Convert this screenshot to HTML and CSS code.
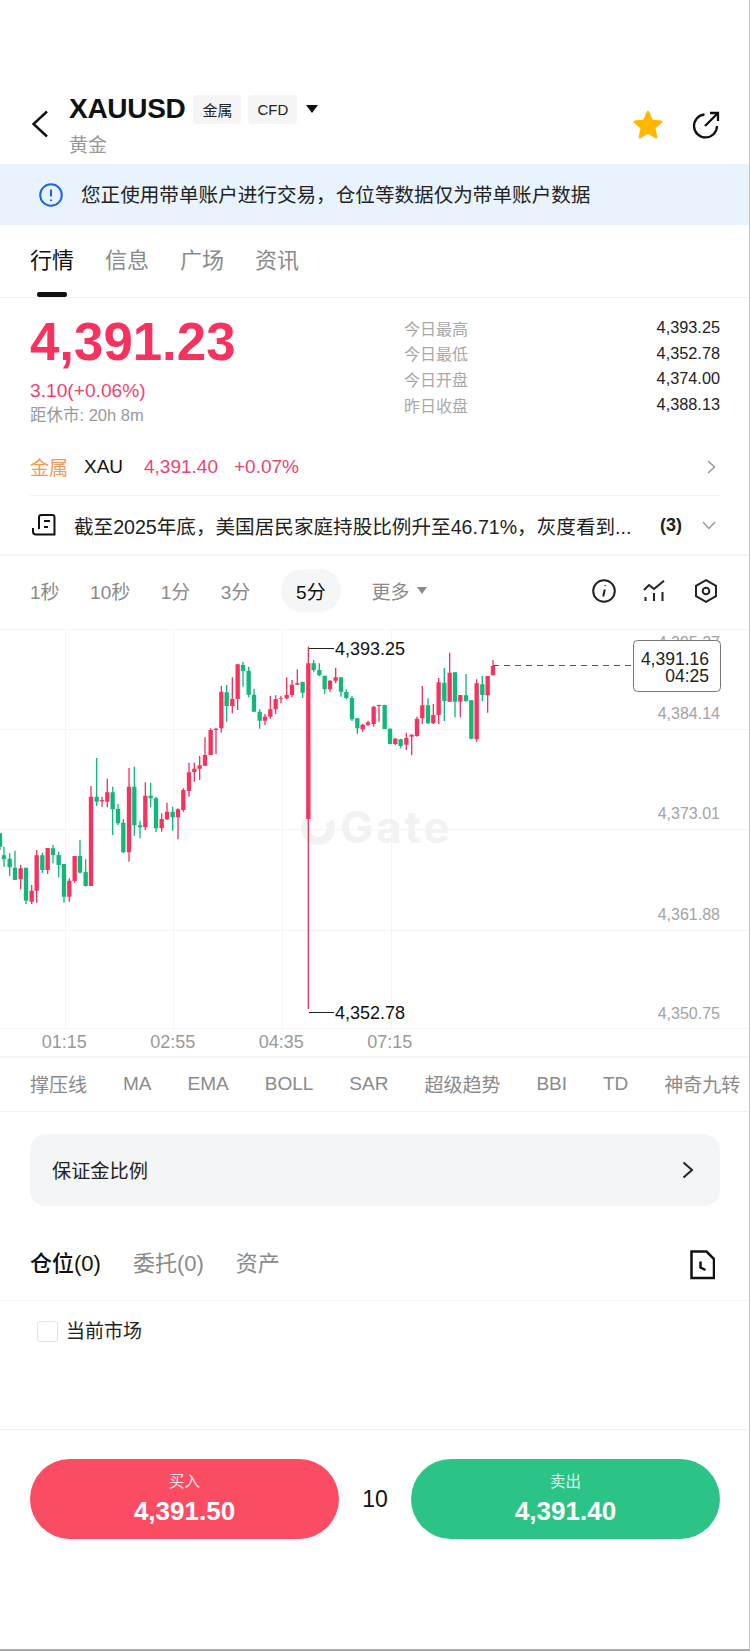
FILE: index.html
```html
<!DOCTYPE html>
<html lang="zh-CN">
<head>
<meta charset="utf-8">
<title>XAUUSD</title>
<link rel="stylesheet" href="styles.css">
</head>
<body>
<div class="page">
  <header class="header">
    <svg class="back" viewBox="0 0 16 28"><path d="M15 1.5 1.5 14 15 26.5"/></svg>
    <div class="title-col">
      <div class="title-row">
        <h1 class="symbol">XAUUSD</h1>
        <span class="tag">金属</span>
        <span class="tag">CFD</span>
        <span class="caret-dark"></span>
      </div>
      <div class="subtitle">黄金</div>
    </div>
    <div class="actions">
      <svg class="star" viewBox="0 0 32 32"><path d="M16 4l3.5 8.100 8.900 .9-6.700 5.900 1.900 8.600L16 23l-7.600 4.500 1.900-8.600L3.600 13l8.900-.9z"/></svg>
      <svg class="share" viewBox="0 0 28 28"><path d="M12.500 3.500A11.500 11.500 0 1 0 25 15M13 15 26 2M18 2h8v8"/></svg>
    </div>
  </header>

  <div class="banner">
    <svg class="banner-icon" viewBox="0 0 24 24"><circle cx="12" cy="12" r="10.800"/><path d="M12 6.500v7M12 16.500v1.500"/></svg>
    <span>您正使用带单账户进行交易，仓位等数据仅为带单账户数据</span>
  </div>

  <nav class="tabs">
    <span class="tab tab-active">行情</span>
    <span class="tab">信息</span>
    <span class="tab">广场</span>
    <span class="tab">资讯</span>
  </nav>

  <section class="quote">
    <div class="quote-left">
      <div class="price">4,391.23</div>
      <div class="change">3.10(+0.06%)</div>
      <div class="close-in">距休市: 20h 8m</div>
    </div>
    <div class="stats">
      <div class="stat"><span class="stat-label">今日最高</span><span>4,393.25</span></div>
      <div class="stat"><span class="stat-label">今日最低</span><span>4,352.78</span></div>
      <div class="stat"><span class="stat-label">今日开盘</span><span>4,374.00</span></div>
      <div class="stat"><span class="stat-label">昨日收盘</span><span>4,388.13</span></div>
    </div>
  </section>

  <div class="metal-row">
    <span class="metal-tag">金属</span>
    <span class="metal-name">XAU</span>
    <span class="metal-price">4,391.40</span>
    <span class="metal-change">+0.07%</span>
    <svg class="metal-chevron" viewBox="0 0 9 14"><path d="M1 1l6.500 6L1 13"/></svg>
  </div>

  <div class="news-row">
    <svg class="news-icon" viewBox="0 0 24 22"><path d="M7 15V3.500Q7 1 9.500 1h11q2 0 2 2.500v17H4q-3 0-3-3V14M12 7h6M12 13h4"/></svg>
    <span class="news-text">截至2025年底，美国居民家庭持股比例升至46.71%，灰度看到...</span>
    <span class="news-count">(3)</span>
    <svg class="news-chevron" viewBox="0 0 14 9"><path d="M1 1l6 6.500L13 1"/></svg>
  </div>

  <div class="timeframes">
    <span>1秒</span>
    <span>10秒</span>
    <span>1分</span>
    <span>3分</span>
    <span class="tf-active">5分</span>
    <span class="tf-more">更多<i class="caret-gray"></i></span>
    <div class="tf-icons">
      <svg viewBox="0 0 24 24"><circle cx="12" cy="12" r="10.800"/><path d="M12.800 10.500 11.200 17.500M13.300 6.300v.6"/></svg>
      <svg viewBox="0 0 24 24"><path d="M1 11l5-5 5 4L21 1.700M2.500 18v4M11 14v8M19.500 13v9"/></svg>
      <svg viewBox="0 0 24 24"><path d="M12 1.200l10 5.700v10.200l-10 5.700-10-5.700V6.900z"/><circle cx="12" cy="12" r="3.300"/></svg>
    </div>
  </div>

  <svg class="chart" viewBox="0 0 750 409">
    <path class="grid" d="M0 9.500H750M0 109.500H750M0 209.500H750M0 310.500H750M0 408.500H750M65.500 9V408M173.500 9V408M282.500 9V408M391.500 9V408"/>
    <circle class="wm-ring" cx="318" cy="208" r="13" stroke-dasharray="62 20" transform="rotate(-30 318 208)"/>
    <text class="wm-text" x="340" y="223">Gate</text>
    <text class="axis" x="720" y="27.500">4,395.27</text>
    <text class="axis" x="720" y="98.500">4,384.14</text>
    <text class="axis" x="720" y="198.500">4,373.01</text>
    <text class="axis" x="720" y="299.500">4,361.88</text>
    <text class="axis" x="720" y="398.500">4,350.75</text>
    <g transform="scale(.33333)">
      <path class="wick-g" d="M0 640V690M12 680V740M29 700V768M45 692V780M78 743V852M127 698V760M159 675V730M176 695V772M192 732V848M240 660V760M257 718V800M290 414V558M338 500V645M354 552V615M370 597V700M403 440V647M420 602V655M452 488V562M468 530V636M518 560V632M680 195V305M729 125V200M746 140V232M762 206V275M779 268V326M908 185V234M941 120V157M958 130V168M974 167V222M1023 172V230M1039 208V238M1056 228V303M1072 293V342M1154 254V327M1170 325V373M1202 356V385M1284 235V312M1333 144V303M1365 157V292M1398 162V245M1414 240V358M1447 168V243"/>
      <path class="body-g" d="M0 640V680M12 706V718M29 716V742M45 743V780M78 743V842M127 706V750M159 685V705M176 705V735M192 732V830M240 708V758M257 756V798M290 530V545M338 517V568M354 567V610M370 608V697M403 500V616M420 616V622M452 527V535M468 535V625M518 575V592M680 217V258M729 135V153M746 152V224M762 224V275M779 275V302M908 186V218M941 130V150M958 150V166M974 167V208M1023 172V215M1039 216V234M1056 234V298M1072 295V325M1154 255V327M1170 326V372M1202 358V378M1284 256V310M1333 188V243M1365 157V245M1398 226V243M1414 241V356M1447 193V225"/>
      <path class="wick-r" d="M62 735V808M95 795V852M110 690V848M143 684V762M208 775V845M224 708V788M273 498V798M306 530V560M322 476V562M387 443V725M436 487V630M485 580V635M501 548V600M534 565V658M550 505V575M567 428V530M583 428V485M599 408V480M615 352V438M632 325V405M648 323V402M664 198V338M697 172V280M713 132V270M795 282V315M811 228V296M827 226V282M843 228V250M860 172V238M876 180V232M892 148V195M925 80V1167M990 180V215M1007 143V190M1088 312V335M1104 302V318M1121 258V320M1137 254V305M1186 354V375M1219 338V390M1235 343V406M1251 290V350M1267 198V312M1300 252V312M1316 174V312M1349 98V245M1381 225V292M1430 178V366M1463 168V278M1479 120V166"/>
      <path class="body-r" d="M62 745V778M95 812V845M110 706V812M143 684V750M208 782V830M224 708V783M273 530V798M306 540V544M322 517V545M387 500V697M436 527V622M485 597V625M501 575V598M534 568V592M550 510V570M567 457V513M583 446V456M599 436V446M615 405V437M632 330V405M648 326V330M664 215V325M697 237V258M713 133V237M795 290V302M811 268V290M827 237V268M843 235V237M860 225V235M876 194V225M892 190V194M925 130V597M990 182V208M1007 172V182M1088 314V328M1104 307V314M1121 260V312M1137 255V258M1186 356V372M1219 354V374M1235 344V350M1251 296V348M1267 256V295M1300 285V310M1316 187V285M1349 158V245M1381 225V245M1430 190V358M1463 168V226M1479 138V166"/>
    </g>
    <path class="mark" d="M309 28.500H334M309 392.500H334"/>
    <text class="mark-text" x="335" y="34.500">4,393.25</text>
    <text class="mark-text" x="335" y="398.500">4,352.78</text>
    <path class="dash" d="M493 45.500H633"/>
    <rect class="tip" x="633.500" y="20.500" width="87" height="51" rx="4"/>
    <text class="tip-text" x="709" y="45">4,391.16</text>
    <text class="tip-text" x="709" y="62">04:25</text>
  </svg>

  <div class="times">
    <span>01:15</span>
    <span>02:55</span>
    <span>04:35</span>
    <span>07:15</span>
  </div>

  <div class="indicators">
    <span>撑压线</span>
    <span>MA</span>
    <span>EMA</span>
    <span>BOLL</span>
    <span>SAR</span>
    <span>超级趋势</span>
    <span>BBI</span>
    <span>TD</span>
    <span>神奇九转</span>
  </div>

  <div class="margin-card">
    <span>保证金比例</span>
    <svg class="margin-chevron" viewBox="0 0 12 18"><path d="M1.500 1.500 10 9l-8.500 7.500"/></svg>
  </div>

  <div class="pos-tabs">
    <span class="pos-tab pos-active">仓位(0)</span>
    <span class="pos-tab">委托(0)</span>
    <span class="pos-tab">资产</span>
    <svg class="pos-icon" viewBox="0 0 25 30"><path d="M1.500 1.500h15L24 9v19H1.500zM10.500 11.500v6l5 2.500"/></svg>
  </div>

  <div class="filter">
    <span class="check"></span>
    <span>当前市场</span>
  </div>

  <div class="trade">
    <button class="trade-btn buy"><span class="trade-label">买入</span><span class="trade-price">4,391.50</span></button>
    <span class="spread">10</span>
    <button class="trade-btn sell"><span class="trade-label">卖出</span><span class="trade-price">4,391.40</span></button>
  </div>
</div>
</body>
</html>
```

FILE: styles.css
```css
* { box-sizing: border-box; }
html, body { margin: 0; padding: 0; background: #fff; }
body { font-family: "Liberation Sans", "Noto Sans CJK SC", sans-serif; color: #111; }
svg { display: block; fill: none; }

.page { position: relative; width: 750px; height: 1651px; overflow: hidden; }
.page::after { content: ""; position: absolute; inset: 0; border-right: 1px solid #c4c4c4; border-bottom: 2px solid #a8a8a8; pointer-events: none; }

.header { height: 164px; padding: 92px 30px 0 32px; display: flex; align-items: flex-start; }
.back { width: 16px; height: 28px; margin: 18px 21px 0 0; stroke: #111; stroke-width: 2.4; }
.title-row { height: 32px; margin-top: 1px; display: flex; align-items: center; }
.symbol { margin: 0 8px 0 0; font-size: 28px; line-height: 32px; font-weight: 700; letter-spacing: -.3px; color: #111; }
.tag { height: 29px; padding: 0 9px; margin-right: 7px; display: flex; align-items: center; background: #f5f5f5; border-radius: 4px; font-size: 15px; color: #222; }
.caret-dark { width: 0; height: 0; margin-left: 2px; border-left: 6px solid transparent; border-right: 6px solid transparent; border-top: 8px solid #111; }
.subtitle { margin-top: 9px; font-size: 19px; line-height: 24px; color: #999; }
.actions { margin-left: auto; margin-top: 16px; display: flex; align-items: center; gap: 27px; }
.star { width: 34px; height: 34px; fill: #ffb800; stroke: #ffb800; stroke-width: 2.5; stroke-linejoin: round; }
.share { width: 28px; height: 28px; stroke: #111; stroke-width: 2.3; }

.banner { height: 61px; padding: 0 0 2px 39px; display: flex; align-items: center; gap: 18px; background: #e8f3fd; font-size: 19.600px; color: #222; }
.banner-icon { width: 24px; height: 24px; margin-top: 2px; stroke: #1768e0; stroke-width: 2; }

.tabs { height: 73px; padding: 22px 0 0 30px; display: flex; gap: 31px; border-bottom: 1px solid #f2f2f2; }
.tab { position: relative; height: 50px; font-size: 22px; line-height: 28px; color: #8a8a8a; }
.tab-active { color: #111; }
.tab-active::after { content: ""; position: absolute; left: 7px; bottom: 0; width: 30px; height: 5px; border-radius: 2px; background: #111; }

.quote { height: 143px; padding: 0 30px; display: flex; justify-content: space-between; }
.price { margin-top: 14px; font-size: 52.800px; line-height: 60px; font-weight: 700; color: #f7325f; }
.change { margin-top: 8px; font-size: 19.200px; line-height: 22px; color: #f0436a; }
.close-in { margin-top: 2px; font-size: 16.500px; line-height: 22px; color: #9a9a9a; }
.stats { width: 316px; padding-top: 17px; }
.stat { height: 25.600px; display: flex; justify-content: space-between; align-items: center; font-size: 16.300px; color: #222; }
.stat-label { font-size: 16px; color: #a8a8a8; }

.metal-row { height: 55px; margin: 0 30px; padding-bottom: 3px; display: flex; align-items: center; border-bottom: 1px solid #f2f2f2; font-size: 19px; }
.metal-tag { width: 54px; color: #f49a55; }
.metal-name { width: 60px; color: #111; }
.metal-price { width: 90px; color: #f0436a; }
.metal-change { color: #f0436a; }
.metal-chevron { width: 9px; height: 14px; margin-left: auto; margin-right: 4px; stroke: #999; stroke-width: 1.500; }

.news-row { height: 60px; padding: 0 34px 0 32px; display: flex; align-items: center; border-bottom: 2px solid #f5f5f5; font-size: 19.600px; color: #222; }
.news-icon { width: 24px; height: 22px; margin-right: 18px; stroke: #111; stroke-width: 2; }
.news-text { width: 587px; white-space: nowrap; overflow: hidden; }
.news-count { width: 42px; font-size: 18px; font-weight: 700; color: #222; }
.news-chevron { width: 14px; height: 9px; stroke: #999; stroke-width: 1.500; }

.timeframes { height: 64px; padding: 13px 32px 8px 30px; display: flex; align-items: center; gap: 30.500px; font-size: 19px; color: #8a8a8a; }
.tf-active { width: 60px; height: 43px; display: flex; align-items: center; justify-content: center; border-radius: 22px; background: #f5f6f7; color: #111; }
.tf-more { display: flex; align-items: center; gap: 8px; }
.caret-gray { width: 0; height: 0; border-left: 5px solid transparent; border-right: 5px solid transparent; border-top: 7px solid #8a8a8a; }
.tf-icons { margin-left: auto; display: flex; gap: 27px; }
.tf-icons svg { width: 24px; height: 24px; stroke: #222; stroke-width: 2; }

.chart { width: 750px; height: 409px; font-family: "Liberation Sans", sans-serif; }
.grid { stroke: #f5f5f5; stroke-width: 1; }
.wm-ring { stroke: #f1f2f3; stroke-width: 8; }
.wm-text { font-family: Inter, sans-serif; font-size: 44px; font-weight: 700; letter-spacing: 3px; fill: #f1f2f3; }
.axis { font-size: 16px; fill: #a3a3a3; text-anchor: end; }
.wick-g { stroke: #12b87a; stroke-width: 4; }
.body-g { stroke: #12b87a; stroke-width: 13; }
.wick-r { stroke: #f7325f; stroke-width: 4; }
.body-r { stroke: #f7325f; stroke-width: 13; }
.mark { stroke: #222; stroke-width: 1; }
.mark-text { font-size: 18px; fill: #111; }
.dash { stroke: #555; stroke-width: 1; stroke-dasharray: 6 5; }
.tip { fill: #fff; stroke: #777; stroke-width: 1; }
.tip-text { font-size: 17.500px; fill: #222; text-anchor: end; }

.times { height: 29px; padding-left: 10px; display: flex; align-items: center; border-bottom: 2px solid #f5f5f5; font-size: 18px; color: #999; }
.times span { width: 108.500px; text-align: center; }

.indicators { height: 54px; padding: 0 0 2px 30px; display: flex; align-items: center; gap: 36px; border-bottom: 1px solid #f2f2f2; font-size: 19px; color: #8a8a8a; white-space: nowrap; overflow: hidden; }

.margin-card { height: 72px; margin: 22px 30px 0; padding: 0 26px 0 22px; display: flex; align-items: center; justify-content: space-between; border-radius: 16px; background: #f4f5f6; font-size: 19.200px; color: #222; }
.margin-chevron { width: 12px; height: 18px; stroke: #222; stroke-width: 2; }

.pos-tabs { height: 95px; padding: 42px 35px 0 30px; display: flex; gap: 32px; border-bottom: 1px solid #f5f5f5; }
.pos-tab { font-size: 22px; line-height: 32px; color: #8a8a8a; }
.pos-active { color: #111; font-weight: 500; }
.pos-icon { width: 25px; height: 30px; margin-top: 2px; margin-left: auto; stroke: #111; stroke-width: 2.500; }

.filter { height: 129px; padding: 20px 0 0 37px; display: flex; align-items: flex-start; gap: 8px; border-bottom: 1px solid #f2f2f2; font-size: 19px; line-height: 22px; color: #222; }
.check { width: 21px; height: 21px; border: 1.500px solid #e2e2e2; border-radius: 3px; }

.trade { padding: 29px 30px 0; display: flex; align-items: center; justify-content: space-between; }
.trade-btn { width: 309px; height: 80px; padding: 0; border: 0; border-radius: 40px; display: flex; flex-direction: column; align-items: center; justify-content: center; font-family: inherit; color: #fff; }
.buy { background: #fa4d63; }
.sell { background: #2cc387; }
.trade-label { font-size: 15.500px; line-height: 22px; opacity: .85; }
.trade-price { margin-top: 2px; font-size: 26px; line-height: 32px; font-weight: 700; }
.spread { font-size: 23px; color: #111; }
```
